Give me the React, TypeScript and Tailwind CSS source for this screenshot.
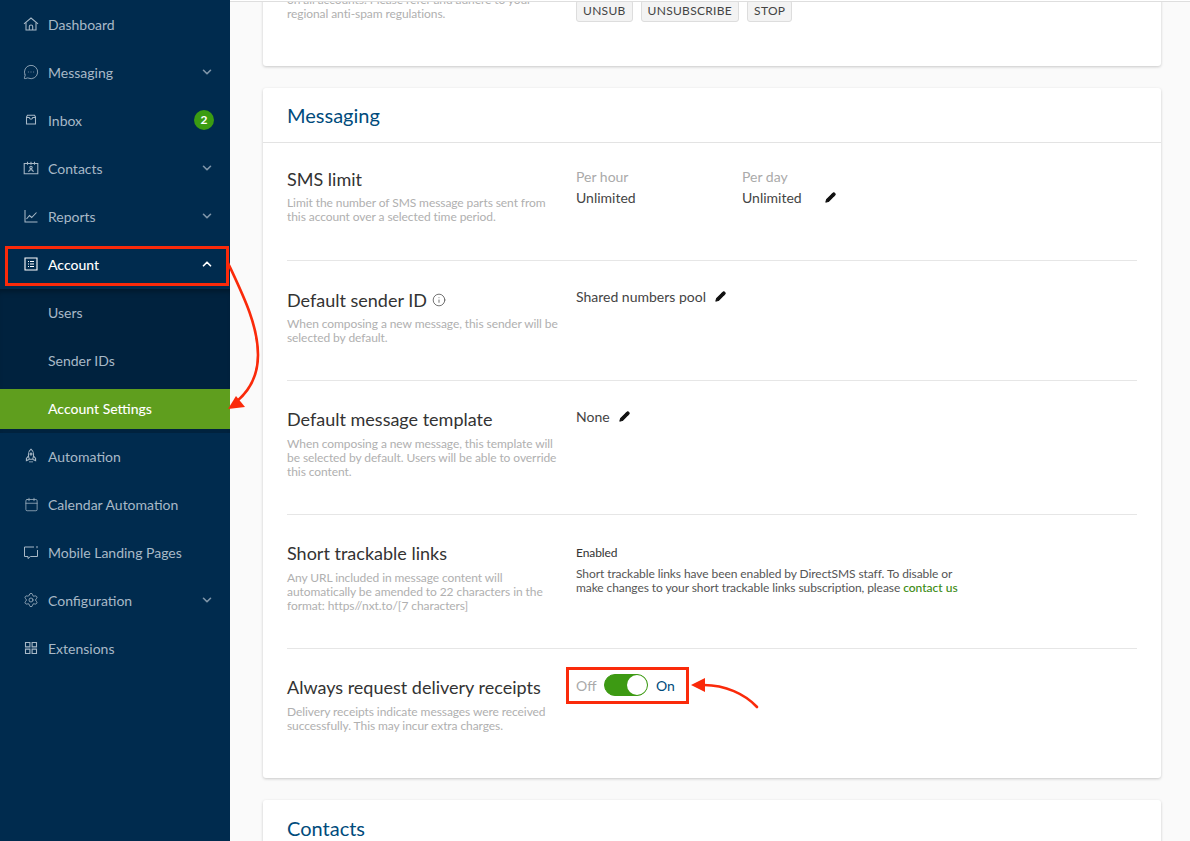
import type { ReactNode } from "react";
import {
  ChevronDown,
  ChevronUp,
  MessageCircleMore,
  Calendar,
  Settings,
  Info,
  Pencil,
} from "lucide-react";

const HomeIcon = () => (
  <svg width="16" height="16" viewBox="0 0 16 16" fill="none" stroke="currentColor" strokeWidth="1.05">
    <path d="M1 7.8 8 2l7 5.8" />
    <path d="M3 6.5v7.5h10V6.5" />
    <path d="M6.3 14v-3.6c0-.9.8-1.5 1.7-1.5s1.7.6 1.7 1.5V14" />
  </svg>
);

const InboxIcon = () => (
  <svg width="16" height="16" viewBox="0 0 16 16" fill="none" stroke="currentColor" strokeWidth="1.05">
    <path d="M3.5 5 4.5 3.2h7L12.5 5v7h-9z" />
    <path d="M3.5 5.5h2.7c.2 1.1 1 1.6 1.8 1.6s1.6-.5 1.8-1.6h2.7" />
  </svg>
);

const ContactsIcon = () => (
  <svg width="16" height="16" viewBox="0 0 16 16" fill="none" stroke="currentColor" strokeWidth="1.05">
    <path d="M1.2 3.4h13.6v10.4H1.2z" />
    <path d="M4.5 1.8v3M8 1.8v3M11.5 1.8v3" />
    <circle cx="8" cy="7.4" r="1.2" />
    <path d="M5.6 11.8c.3-1.5 1.2-2.2 2.4-2.2s2.1.7 2.4 2.2" />
  </svg>
);

const ReportsIcon = () => (
  <svg width="16" height="16" viewBox="0 0 16 16" fill="none" stroke="currentColor" strokeWidth="1.05">
    <path d="M2 2v12h12.5" />
    <path d="M3.5 11 6.5 7.5l2.2 2L13.5 4.5" />
  </svg>
);

const AccountIcon = () => (
  <svg width="16" height="16" viewBox="0 0 16 16" fill="none" stroke="currentColor" strokeWidth="1.1">
    <path d="M2 2h12v12H2z" />
    <path d="M5 5.5h1M7 5.5h4M5 8h1M7 8h4M5 10.5h1M7 10.5h4" />
  </svg>
);

const RocketIcon = () => (
  <svg width="16" height="16" viewBox="0 0 16 16" fill="none" stroke="currentColor" strokeWidth="1.05">
    <path d="M8 1.2c1.8 1.4 2.6 3.2 2.6 5.2 0 1.8-.4 3.4-1 4.8H6.4c-.6-1.4-1-3-1-4.8 0-2 .8-3.8 2.6-5.2z" />
    <circle cx="8" cy="6" r="1" />
    <path d="M5.6 7.8 3.4 10.4v2.2l2.6-1.2M10.4 7.8l2.2 2.6v2.2L10 11.4M7 13v1.4M9 13v1.4" />
  </svg>
);

const LandingIcon = () => (
  <svg width="16" height="16" viewBox="0 0 16 16" fill="none" stroke="currentColor" strokeWidth="1">
    <path d="M11 3H1.5v9.5h3.5v2l2.5-2h7V6" />
    <path d="M14 2v2.2" />
  </svg>
);

const ExtensionsIcon = () => (
  <svg width="16" height="16" viewBox="0 0 16 16" fill="none" stroke="currentColor" strokeWidth="1.1">
    <path d="M2.5 2.5h4.4v4.4H2.5zM9.1 2.5h4.4v4.4H9.1zM2.5 9.1h4.4v4.4H2.5zM9.1 9.1h4.4v4.4H9.1z" />
  </svg>
);

type NavItem = {
  label: string;
  icon: ReactNode;
  arrow?: boolean;
};

const topItems: NavItem[] = [
  { label: "Dashboard", icon: <HomeIcon /> },
  { label: "Messaging", icon: <MessageCircleMore size={16} strokeWidth={1.2} />, arrow: true },
  { label: "Inbox", icon: <InboxIcon /> },
  { label: "Contacts", icon: <ContactsIcon />, arrow: true },
  { label: "Reports", icon: <ReportsIcon />, arrow: true },
];

const bottomItems: NavItem[] = [
  { label: "Automation", icon: <RocketIcon /> },
  { label: "Calendar Automation", icon: <Calendar size={15} strokeWidth={1.2} /> },
  { label: "Mobile Landing Pages", icon: <LandingIcon /> },
  { label: "Configuration", icon: <Settings size={16} strokeWidth={1.2} />, arrow: true },
  { label: "Extensions", icon: <ExtensionsIcon /> },
];

function NavRow({ item }: { item: NavItem }) {
  return (
    <div className="flex h-12 items-center pb-[2px] pl-[23px] pr-[16px] text-[14px] text-[#a8b9c7]">
      <span className="flex w-[25px] shrink-0 items-center">
        <span className="flex w-[16px] justify-center text-[#a8b9c7]">{item.icon}</span>
      </span>
      <span className="flex-1">{item.label}</span>
      {item.label === "Inbox" && (
        <span className="flex h-5 w-5 items-center justify-center rounded-full bg-[#3b9c12] text-[12px] font-bold text-white">
          2
        </span>
      )}
      {item.arrow && <ChevronDown size={14} strokeWidth={2.8} className="text-[#7f96a9]" />}
    </div>
  );
}

function Pen() {
  return <Pencil size={11} strokeWidth={2.4} fill="#111" className="text-[#111]" />;
}

function Desc({ children, gap = "mt-[5px]" }: { children: ReactNode; gap?: string }) {
  return (
    <p className={`${gap} w-[272px] text-[12px] leading-[14px] tracking-[-0.08px] text-[#b0b0b0]`}>{children}</p>
  );
}

function Title({ children }: { children: ReactNode }) {
  return <h3 className="text-[18px] leading-6 text-[#333]">{children}</h3>;
}

function Row({ className, children }: { className: string; children: ReactNode }) {
  return <div className={`flex border-b border-[#e6e6e6] ${className}`}>{children}</div>;
}

export default function App() {
  return (
    <div className="relative flex h-[841px] w-[1190px] overflow-hidden bg-white font-['Lato','Open_Sans',sans-serif]">
      <aside className="h-full w-[230px] shrink-0 bg-[#002b4e] pt-px">
        {topItems.map((item) => (
          <NavRow key={item.label} item={item} />
        ))}
        <div className="flex h-12 items-center pb-[2px] pl-[23px] pr-[16px] text-[14px] font-medium text-white">
          <span className="w-[25px] shrink-0">
            <AccountIcon />
          </span>
          <span className="flex-1">Account</span>
          <ChevronUp size={14} strokeWidth={3} />
        </div>
        <div className="bg-[#00223e] pb-1 text-[14px] text-[#a8b9c7] shadow-[inset_0_6px_6px_-4px_rgba(0,0,0,0.35)]">
          <div className="flex h-12 items-center pb-[2px] pl-[48px]">Users</div>
          <div className="flex h-12 items-center pb-[2px] pl-[48px]">Sender IDs</div>
          <div className="mt-1 flex h-10 items-center bg-[#5f9e1e] pb-[2px] pl-[48px] font-medium text-white">
            Account Settings
          </div>
        </div>
        {bottomItems.map((item) => (
          <NavRow key={item.label} item={item} />
        ))}
      </aside>

      <main className="mt-px h-full flex-1 overflow-hidden border-t border-[#dedede] bg-[#fafafa] pl-[33px] pr-[29px]">
        <section className="-mt-[40px] flex h-[104px] rounded-[3px] bg-white px-6 pt-[31px] shadow-[0_1px_3px_rgba(0,0,0,0.2)]">
          <p className="w-[289px] shrink-0 text-[12px] leading-[14px] tracking-[-0.08px] text-[#b0b0b0]">
            on all accounts. Please refer and adhere to your
            <br />
            regional anti-spam regulations.
          </p>
          <div className="mt-[7px] flex gap-2 text-[12px] tracking-[0.3px] text-[#444]">
            {["UNSUB", "UNSUBSCRIBE", "STOP"].map((chip) => (
              <span
                key={chip}
                className="flex h-[22px] items-center rounded-[3px] border border-[#ddd] bg-[#f3f3f3] px-[6px]"
              >
                {chip}
              </span>
            ))}
          </div>
        </section>

        <section className="mt-[22px] rounded-[3px] bg-white shadow-[0_1px_3px_rgba(0,0,0,0.2)]">
          <div className="flex h-[55px] items-center border-b border-[#e3e3e3] px-6 text-[20px] text-[#004b7c]">
            Messaging
          </div>
          <div className="px-6">
            <Row className="h-[118px] pt-6">
              <div className="w-[289px] shrink-0">
                <Title>SMS limit</Title>
                <Desc>Limit the number of SMS message parts sent from this account over a selected time period.</Desc>
              </div>
              <div className="-mt-px w-[166px] text-[14px]">
                <div className="leading-[21px] text-[#aaa]">Per hour</div>
                <div className="leading-[21px] text-[#444]">Unlimited</div>
              </div>
              <div className="-mt-px text-[14px]">
                <div className="leading-[21px] text-[#aaa]">Per day</div>
                <div className="flex items-center gap-[23px] leading-[21px] text-[#444]">
                  Unlimited <Pen />
                </div>
              </div>
            </Row>
            <Row className="h-[120px] pt-[27px]">
              <div className="w-[289px] shrink-0">
                <Title>
                  <span className="flex items-center gap-[5px]">
                    Default sender ID <Info size={14} strokeWidth={1.4} className="text-[#555]" />
                  </span>
                </Title>
                <Desc>When composing a new message, this sender will be selected by default.</Desc>
              </div>
              <div className="-mt-[2px] flex h-[21px] items-center gap-[9px] text-[14px] text-[#444]">
                Shared numbers pool <Pen />
              </div>
            </Row>
            <Row className="h-[134px] pt-[26px]">
              <div className="w-[289px] shrink-0">
                <Title>Default message template</Title>
                <Desc gap="mt-[6px]">
                  When composing a new message, this template will be selected by default. Users will be able to
                  override this content.
                </Desc>
              </div>
              <div className="-mt-px flex h-[21px] items-center gap-[9px] text-[14px] text-[#444]">
                None <Pen />
              </div>
            </Row>
            <Row className="h-[134px] pt-[26px]">
              <div className="w-[289px] shrink-0">
                <Title>Short trackable links</Title>
                <Desc gap="mt-[6px]">
                  Any URL included in message content will automatically be amended to 22 characters in the format:
                  https//nxt.to/[7 characters]
                </Desc>
              </div>
              <div className="w-[390px] text-[12px] leading-[14px] tracking-[-0.08px] text-[#555]">
                <div className="mt-[5px] text-[#333]">Enabled</div>
                <p className="mt-[7px]">
                  Short trackable links have been enabled by DirectSMS staff. To disable or make changes to your short
                  trackable links subscription, please{" "}
                  <span className="font-medium tracking-normal text-[#3b8a12]">contact us</span>
                </p>
              </div>
            </Row>
            <div className="flex h-[129px] pt-[26px]">
              <div className="w-[289px] shrink-0">
                <Title>Always request delivery receipts</Title>
                <Desc gap="mt-[6px]">
                  Delivery receipts indicate messages were received successfully. This may incur extra charges.
                </Desc>
              </div>
              <div className="-mt-[2px] flex h-6 items-center text-[14px]">
                <span className="w-[28px] text-[#aaa]">Off</span>
                <span className="flex h-[22px] w-[44px] items-center justify-end rounded-full border border-[#3d9a13] bg-[#3d9a13]">
                  <span className="h-5 w-5 rounded-full bg-white" />
                </span>
                <span className="ml-2 text-[#004b7c]">On</span>
              </div>
            </div>
          </div>
        </section>

        <section className="mt-[22px] h-[60px] rounded-[3px] bg-white shadow-[0_1px_3px_rgba(0,0,0,0.2)]">
          <div className="flex h-[55px] items-center px-6 text-[20px] text-[#004b7c]">Contacts</div>
        </section>
      </main>

      <div className="pointer-events-none absolute left-[5px] top-[246px] h-[40px] w-[224px] border-[3px] border-[#fa2a0a]" />
      <div className="pointer-events-none absolute left-[566px] top-[667px] h-[37px] w-[123px] border-[3px] border-[#fa2a0a]" />

      <svg className="pointer-events-none absolute left-0 top-0" width="1190" height="841" fill="none">
        <path d="M228 263C243 295 258 325 258 355C258 378 248 392 236 402" stroke="#fa2a0a" strokeWidth="2.6" />
        <path d="M228 409L245 407L236 396Z" fill="#fa2a0a" />
        <path d="M757 707C745 694 725 685 704 685" stroke="#fa2a0a" strokeWidth="2.6" strokeLinecap="round" />
        <path d="M691 685L705 678L705 692Z" fill="#fa2a0a" />
      </svg>
    </div>
  );
}
